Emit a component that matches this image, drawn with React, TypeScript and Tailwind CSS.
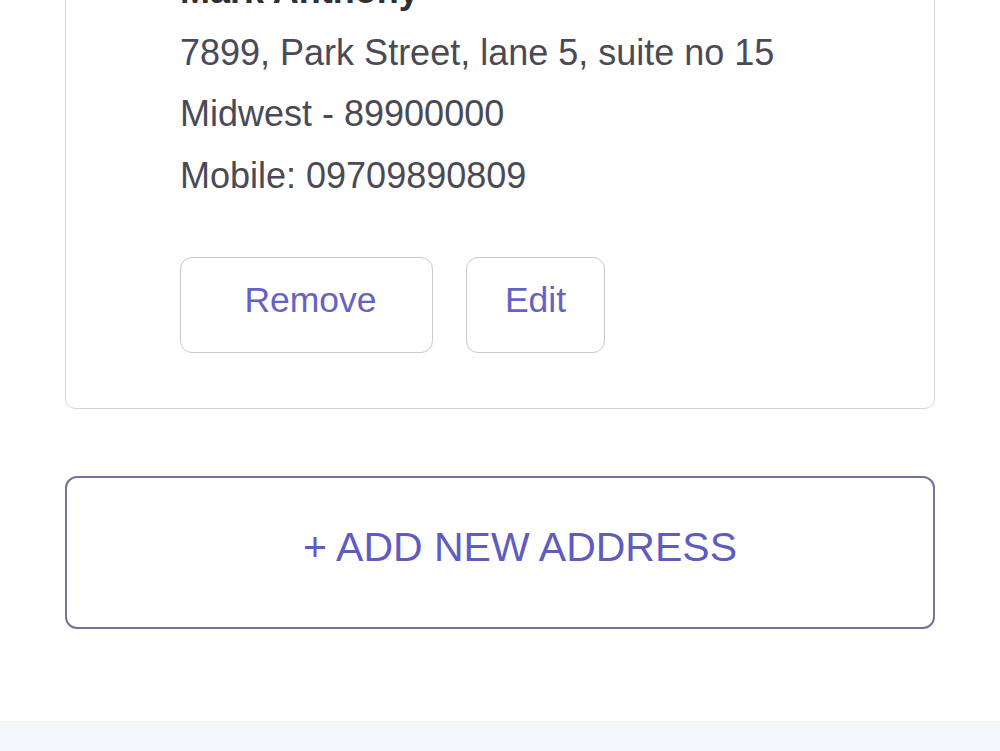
import React from 'react';

interface Address {
    name: string;
    street: string;
    region: string;
    mobile: string;
}

const savedAddress: Address = {
    name: 'Mark Anthony',
    street: '7899, Park Street, lane 5, suite no 15',
    region: 'Midwest - 89900000',
    mobile: 'Mobile: 09709890809',
};

const AddressCard: React.FC<{ address: Address }> = ({ address }) => (
    <div className="rounded-[10px] border border-[#d4d4d8] pt-[30px] pb-[55px] pl-[114px]">
        <div className="text-[36px] leading-[61.5px] text-[#4a4a56]">
            <p className="font-bold text-[#2f2f38]">{address.name}</p>
            <p>{address.street}</p>
            <p>{address.region}</p>
            <p>{address.mobile}</p>
        </div>
        <div className="mt-[51px] flex gap-[33px]">
            <button className="h-[96px] w-[253px] rounded-[12px] border border-[#c9c9ce] pb-[8px] pl-[8px] text-[35.5px] text-[#6662c4]">
                Remove
            </button>
            <button className="h-[96px] w-[139px] rounded-[12px] border border-[#c9c9ce] pb-[8px] text-[35.5px] text-[#6662c4]">
                Edit
            </button>
        </div>
    </div>
);

export default function App() {
    return (
        <div className="flex h-[751px] flex-col overflow-hidden bg-white font-['Liberation_Sans',Arial,sans-serif]">
            <div className="-mt-[71px] px-[65px]">
                <AddressCard address={savedAddress} />

                {/* Add address */}
                <button className="mt-[67px] flex h-[153px] w-full items-center justify-center rounded-[12px] border-2 border-[#74729c] pb-[10px] pl-[40px] text-[41px] text-[#5f5bbf]">
                    + ADD NEW ADDRESS
                </button>
            </div>

            {/* Footer strip */}
            <div className="mt-[92px] flex-1 bg-[#f5f6f9]" />
        </div>
    );
}
